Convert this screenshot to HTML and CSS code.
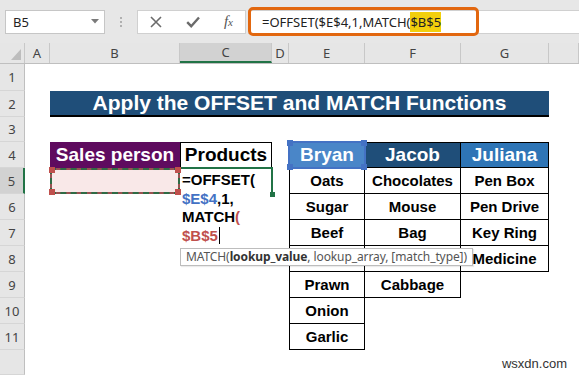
FILE: index.html
```html
<!DOCTYPE html>
<html lang="en">
  <head>
    <meta charset="UTF-8" />
    <meta name="viewport" content="width=device-width, initial-scale=1.0" />
    <title>OFFSET and MATCH</title>
    <link rel="stylesheet" href="styles.css">
  </head>
  <body>
    <div class="toolbar">
      <div class="namebox">
        <span>B5</span>
        <svg class="caret-down" width="8" height="5" viewBox="0 0 8 5"><path d="M0 0h8L4 4.5z" fill="#7a7a7a"/></svg>
      </div>
      <div class="grip"><i></i><i></i><i></i></div>
      <div class="fxbox">
        <svg width="12" height="12" viewBox="0 0 12 12"><path d="M1 1l10 10M11 1L1 11" stroke="#6b6b6b" stroke-width="1.6" fill="none"/></svg>
        <svg width="14" height="12" viewBox="0 0 14 12"><path d="M1.2 6.2l4 4L13 1.5" stroke="#6b6b6b" stroke-width="2.4" fill="none"/></svg>
        <span class="fx">f<small>x</small></span>
      </div>
      <div class="formula">
        <div class="formula-edit">=OFFSET($E$4,1,MATCH(<mark>$B$5</mark></div>
      </div>
    </div>

    <div class="sheet">
      <div class="row head">
        <div class="corner"></div>
        <div class="col">A</div>
        <div class="col">B</div>
        <div class="col active">C</div>
        <div class="col">D</div>
        <div class="col">E</div>
        <div class="col">F</div>
        <div class="col">G</div>
        <div class="col"></div>
      </div>

      <div class="row r1">
        <div class="num">1</div>
      </div>

      <div class="row">
        <div class="num">2</div>
        <div></div>
        <div class="title">Apply the OFFSET and MATCH Functions</div>
      </div>

      <div class="row r3">
        <div class="num">3</div>
      </div>

      <div class="row">
        <div class="num">4</div>
        <div></div>
        <div class="purple">Sales person</div>
        <div class="boxed">Products</div>
        <div></div>
        <div class="t th first top ref">Bryan
          <i class="h tl"></i><i class="h tr"></i><i class="h bl"></i><i class="h br"></i>
        </div>
        <div class="t th dark top">Jacob</div>
        <div class="t th top">Juliana</div>
      </div>

      <div class="row">
        <div class="num active">5</div>
        <div></div>
        <div class="marquee">
          <i class="h tl"></i><i class="h tr"></i><i class="h bl"></i><i class="h br"></i>
        </div>
        <div class="edit">
          <div class="edit-text">
            =OFFSET(<br>
            <span class="blue">$E$4</span>,1,<br>
            MATCH<span class="red">(</span><br>
            <span class="red">$B$5</span><span class="cursor"></span>
          </div>
        </div>
        <div></div>
        <div class="t first">Oats</div>
        <div class="t">Chocolates</div>
        <div class="t">Pen Box</div>
      </div>

      <div class="row">
        <div class="num">6</div>
        <div></div><div></div><div></div><div></div>
        <div class="t first">Sugar</div>
        <div class="t">Mouse</div>
        <div class="t">Pen Drive</div>
      </div>

      <div class="row">
        <div class="num">7</div>
        <div></div><div></div><div></div><div></div>
        <div class="t first">Beef</div>
        <div class="t">Bag</div>
        <div class="t">Key Ring</div>
      </div>

      <div class="row">
        <div class="num">8</div>
        <div></div><div></div><div></div><div></div>
        <div class="t first"></div>
        <div class="t"></div>
        <div class="t">Medicine</div>
      </div>

      <div class="row">
        <div class="num">9</div>
        <div></div><div></div><div></div><div></div>
        <div class="t first">Prawn</div>
        <div class="t">Cabbage</div>
      </div>

      <div class="row">
        <div class="num">10</div>
        <div></div><div></div><div></div><div></div>
        <div class="t first">Onion</div>
      </div>

      <div class="row">
        <div class="num">11</div>
        <div></div><div></div><div></div><div></div>
        <div class="t first">Garlic</div>
      </div>

      <div class="row rest">
        <div class="num"></div>
      </div>

      <div class="tooltip">MATCH(<b>lookup_value</b>, lookup_array, [match_type])</div>
      <div class="watermark">wsxdn.com</div>
    </div>
  </body>
</html>
```

FILE: styles.css
```css
* {
  padding: 0;
  margin: 0;
  box-sizing: border-box;
}
body {
  width: 579px;
  height: 375px;
  overflow: hidden;
  background: #fff;
  font-family: "Liberation Sans", Arial, sans-serif;
}

/* formula bar */
.toolbar {
  height: 43px;
  background: #e7e7e7;
  display: flex;
  align-items: center;
  padding-left: 5px;
}
.namebox {
  width: 100px;
  height: 24px;
  background: #fff;
  border: 1px solid #c6c6c6;
  display: flex;
  align-items: center;
  justify-content: space-between;
  padding: 0 5px 0 7px;
  font: 13px "Noto Sans", sans-serif;
  color: #222;
}
.grip {
  width: 32px;
  display: flex;
  flex-direction: column;
  align-items: center;
  gap: 2px;
}
.grip i {
  width: 2px;
  height: 2px;
  background: #b0b0b0;
}
.fxbox {
  width: 109px;
  height: 24px;
  background: #fff;
  border: 1px solid #d0d0d0;
  display: flex;
  align-items: center;
  justify-content: space-around;
}
.fx {
  font: italic 15px "Liberation Serif", serif;
  color: #555;
}
.fx small {
  font-size: 11px;
}
.formula {
  flex: 1;
  height: 24px;
  margin-left: 2px;
  background: #fff;
  border-top: 1px solid #d0d0d0;
  border-bottom: 1px solid #d0d0d0;
  display: flex;
  align-items: center;
}
.formula-edit {
  width: 231px;
  height: 29px;
  border: 3px solid #e2670f;
  border-radius: 5px;
  padding-left: 11px;
  display: flex;
  align-items: center;
  font: 13px "Noto Sans", sans-serif;
  color: #222;
  white-space: nowrap;
}
.formula-edit mark {
  background: #f2cf0c;
  color: #222;
  padding: 1px 0;
}

/* sheet */
.sheet {
  position: relative;
  height: 332px;
  display: flex;
  flex-direction: column;
}
.row {
  display: grid;
  grid-template-columns: 25px 25px 130px 92px 17px 76px 96px 88px 1fr;
  grid-template-rows: 100%;
  height: 26px;
  flex-shrink: 0;
}
.row.r1 {
  height: 27px;
}
.row.r3 {
  height: 25px;
}
.row.rest {
  flex: 1;
}
.head {
  height: 21px;
  background: #e6e6e6;
  border-bottom: 1px solid #bfbfbf;
}
.corner {
  border-right: 1px solid #c8c8c8;
  position: relative;
}
.corner::after {
  content: "";
  position: absolute;
  right: 3px;
  bottom: 3px;
  border-left: 10px solid transparent;
  border-bottom: 11px solid #bdbdbd;
}
.col {
  border-right: 1px solid #c8c8c8;
  display: flex;
  align-items: center;
  justify-content: center;
  font: 13px "Noto Sans", sans-serif;
  color: #444;
}
.col.active {
  background: #d2d2d2;
  border-bottom: 2px solid #217346;
}
.num {
  background: #e6e6e6;
  border-right: 1px solid #bfbfbf;
  border-bottom: 1px solid #d6d6d6;
  display: flex;
  align-items: center;
  justify-content: center;
  font: 13px "Noto Sans", sans-serif;
  color: #444;
}
.num.active {
  background: #d2d2d2;
  border-right: 2px solid #217346;
}

.title {
  grid-column: span 6;
  background: #1f4e79;
  border-bottom: 2px solid #000;
  color: #fff;
  font-weight: bold;
  font-size: 21px;
  display: flex;
  align-items: center;
  justify-content: center;
}
.purple,
.boxed,
.t {
  display: flex;
  align-items: center;
  justify-content: center;
  font-weight: bold;
}
.purple {
  background: #5f0b5f;
  color: #fff;
  font-size: 19px;
}
.boxed {
  border: 1px solid #000;
  font-size: 19px;
}
.t {
  border-right: 1px solid #000;
  border-bottom: 1px solid #000;
  font-size: 15px;
  color: #000;
}
.t.first {
  border-left: 1px solid #000;
}
.t.top {
  border-top: 1px solid #000;
}
.th {
  background: #2e75b6;
  color: #fff;
  font-size: 19px;
}
.th.dark {
  background: #1f4e79;
}
.th.ref {
  background: #4a86c8;
  position: relative;
  outline: 2px solid #4472c4;
  outline-offset: -1px;
}

/* reference markers */
.h {
  position: absolute;
  width: 6px;
  height: 6px;
  z-index: 2;
}
.h.tl { left: -3px; top: -3px; }
.h.tr { right: -3px; top: -3px; }
.h.bl { left: -3px; bottom: -3px; }
.h.br { right: -3px; bottom: -3px; }
.ref .h {
  background: #4472c4;
}
.marquee {
  position: relative;
  border: 2px dashed #2f6b45;
  background: linear-gradient(#f9e8e8, #f9e8e8) padding-box, #9a5252 border-box;
}
.marquee .h {
  background: #c0504d;
}

/* cell in edit mode */
.edit {
  position: relative;
}
.edit::before {
  content: "";
  position: absolute;
  left: 0;
  top: -1px;
  right: -1px;
  height: 28px;
  border-top: 2px solid #217346;
  border-right: 2px solid #217346;
}
.edit::after {
  content: "";
  position: absolute;
  right: -3px;
  top: 24px;
  width: 5px;
  height: 5px;
  background: #217346;
}
.edit-text {
  position: relative;
  z-index: 1;
  padding: 3px 0 0 2px;
  line-height: 18.5px;
  font-size: 15px;
  font-weight: bold;
  color: #000;
  white-space: nowrap;
}
.blue {
  color: #4472c4;
}
.red {
  color: #c0504d;
}
.cursor {
  display: inline-block;
  width: 1px;
  height: 17px;
  margin-left: 1px;
  background: #000;
  vertical-align: -3px;
}

.tooltip {
  position: absolute;
  left: 180px;
  top: 205px;
  height: 18px;
  padding: 0 5px;
  background: #fff;
  border: 1px solid #bdbdbd;
  box-shadow: 1px 1px 1px rgba(0, 0, 0, 0.08);
  font: 12px "Noto Sans", sans-serif;
  line-height: 16px;
  letter-spacing: -0.1px;
  color: #555;
  white-space: nowrap;
  z-index: 3;
}
.tooltip b {
  color: #333;
}
.watermark {
  position: absolute;
  right: 12px;
  bottom: 4px;
  font-size: 13px;
  color: #333;
}
```
